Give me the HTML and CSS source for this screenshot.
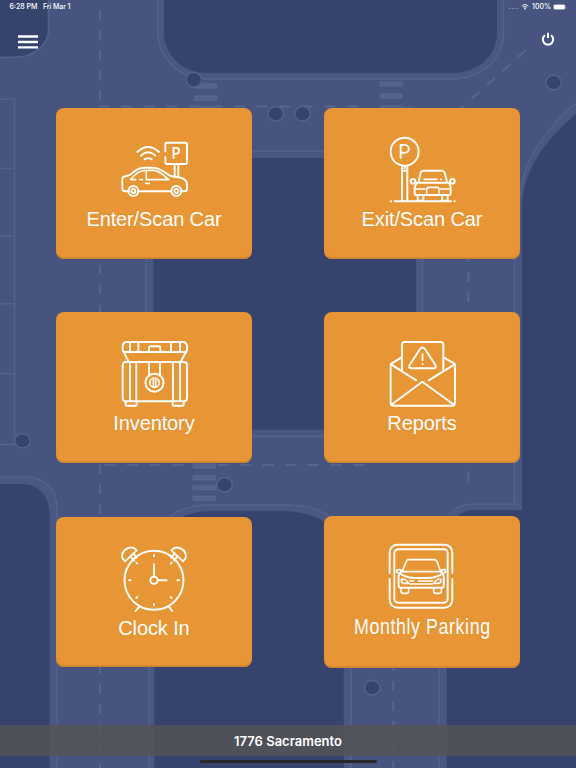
FILE: index.html
```html
<!DOCTYPE html>
<html lang="en">
<head>
<meta charset="utf-8">
<title>Parking</title>
<link rel="stylesheet" href="styles.css">
</head>
<body>
<svg class="map" viewBox="0 0 576 768" width="576" height="768" aria-hidden="true">
  <!-- road shoulders -->
  <g class="shoulder">
    <path d="M158 0V33C158 58 180 79 206 79H451C483 79 503.500 58 503.500 33V0Z"/>
    <path d="M146 151H422.500V436.500H146Z"/>
    <path d="M0 477H25C45 477 57 490 57 508V768H0Z"/>
    <path d="M149 768V560C149 525 175 505 209 505H287C325 505 351.300 525 351.300 560V768Z"/>
    <path d="M576 103C545 130 520 162 520 200L514.300 258V504.300H472C450 504.300 439 525 439 545V768H576Z"/>
  </g>
  <!-- city blocks -->
  <g class="block">
    <path d="M0 0H48V30C48 46 32 57 15 57H0Z"/>
    <path d="M164 0V33C164 54 182 73 206 73H451C478 73 497 56 497 33V0Z"/>
    <path d="M153.500 158H416V429.700H153.500Z"/>
    <path d="M0 484H22C39 484 49.500 497 49.500 514V768H0Z"/>
    <path d="M154.300 768V560C154.300 528 180 511 212 511H282C320 511 343.700 530 343.700 560V768Z"/>
    <path d="M576 114C545 140 522 172 522 208V510H475C457 510 446.700 525 446.700 545V768H576Z"/>
  </g>
  <g class="lane">
    <path d="M48.500 0V30C48.500 46 32 57.300 15 57.300H0"/>
    <path d="M158 0V33C158 58 180 79 206 79H451C483 79 503.500 58 503.500 33V0"/>
    <path d="M146 151H422.500V436.500H146Z"/>
    <path d="M0 477H25C45 477 57 490 57 508V768"/>
    <path d="M149 768V560C149 525 175 505 209 505H287C325 505 351.300 525 351.300 560V768"/>
    <path d="M576 103C545 130 520 162 520 200L514.300 258V504.300H472C450 504.300 439 525 439 545V768"/>
    <path d="M0 99H14.500V444.500H0M0 168.500H14M0 235.700H14M0 303.700H14M0 373.500H14"/>
  </g>
  <g class="dashes">
    <path d="M100 10.500V106" stroke-dasharray="10 10"/>
    <path d="M100 265V768" stroke-dasharray="9.500 10.450"/>
    <path d="M98.500 106.500H360" stroke-dasharray="11 11.600"/>
    <path d="M104.500 465H366" stroke-dasharray="11 11.600"/>
    <path d="M468.300 252V302" stroke-dasharray="10 10"/>
    <path d="M468.300 471.500V481.500"/>
    <path d="M393.300 661V768" stroke-dasharray="10 10"/>
    <path d="M526 50L460 109" stroke-dasharray="10.500 10.300"/>
  </g>
  <g class="crossing">
    <path d="M194 86H217.500M194 98.200H217.500M194 108.500H217.500M379.500 84H403M379.500 96H403M379.500 108H403M192.500 466H216M192.500 477.800H216M192.500 487.800H216M192.500 498.300H216"/>
  </g>
  <g class="tree">
    <ellipse cx="193.800" cy="79.700" rx="7.800" ry="7.200"/>
    <ellipse cx="275.800" cy="113.700" rx="7.800" ry="7.200"/>
    <ellipse cx="302.600" cy="113.700" rx="7.800" ry="7.200"/>
    <ellipse cx="408" cy="114" rx="7.800" ry="7.200"/>
    <ellipse cx="553.600" cy="82.500" rx="7.800" ry="7.200"/>
    <ellipse cx="22.500" cy="440.700" rx="7.800" ry="7.200"/>
    <ellipse cx="224.500" cy="484.700" rx="7.800" ry="7.200"/>
    <ellipse cx="372.300" cy="687.800" rx="7.800" ry="7.200"/>
  </g>
</svg>

<div class="app">
  <div class="status">
    <span class="time">6:28 PM</span>
    <span class="date">Fri Mar 1</span>
    <span class="signal">....</span>
    <svg class="wifi" viewBox="0 0 24 18" width="8" height="6"><path d="M2 6.500C8 .5 16 .5 22 6.500M6 10.500C9.500 7 14.500 7 18 10.500"/><path class="solid" d="M8.500 13.500Q12 10.500 15.500 13.500L12 17.500Z"/></svg>
    <span class="percent">100%</span>
    <svg class="battery" viewBox="0 0 42 18" width="14" height="6"><rect class="case" x="1" y="1" width="36" height="16" rx="5"/><rect class="solid" x="2.500" y="2.500" width="33" height="13" rx="3.500"/><path class="nub" d="M39 6Q42 9 39 12Z"/></svg>
  </div>
  <div class="toolbar">
    <svg class="menu" viewBox="0 0 20 14" width="20" height="14"><path d="M0 1.500H20M0 7H20M0 12.300H20"/></svg>
    <svg class="power" viewBox="0 0 14 14" width="14" height="14"><path d="M3.900 3.300A5.200 5.200 0 1 0 10.100 3.300M7 .8V6"/></svg>
  </div>

  <main class="grid">
    <a class="card">
      <svg class="icon" viewBox="0 0 270 240">
        <path d="M57 184H46Q37 184 37 173V147Q37 139 50 138Q60 136 66 130C78 118 90 113 106 113H128C150 113 160 124 178 136Q186 140 205 142Q231 145 231 165V177Q231 184 223 184H212M85 184H184"/>
        <path class="thin" d="M61 149C76 132 88 121 108 121H130C147 121 155 132 177 149H112M61 149H77M89 149H97M109 122V149M107 160H118"/>
        <circle cx="70" cy="183" r="15"/><circle cx="70" cy="183" r="6"/>
        <circle cx="199" cy="183" r="15"/><circle cx="199" cy="183" r="6"/>
        <path d="M82 66Q114 36 147 66M93 77Q114 56 136 77M104 88Q114 81 125 88"/>
        <path d="M166 64V43Q166 38 171 38H226Q231 38 231 43V97Q231 102 226 102H171Q166 102 166 97V81M194 103V139M205 103V141"/>
        <text class="sign" x="184" y="86">P</text>
      </svg>
      <span class="label">Enter/Scan Car</span>
    </a>
    <a class="card">
      <svg class="icon" viewBox="0 0 270 240">
        <circle cx="80" cy="65" r="42"/>
        <path d="M68 83V45H81A11 11 0 0 1 81 68H68"/>
        <path d="M72 108V212M88 108V212M73 122H87M80 108V115M50 214H219M38 214H39M229 214H230"/>
        <path d="M122 155L128 128Q130 122 137 122H191Q198 122 200 128L207 155M116 158H214L218 172V191Q218 195 214 195H114Q110 195 110 191V172Z"/>
        <path class="thin" d="M138 148H177M188 148H190M112 177H141M188 177H217M146 194V178Q146 172 152 172H177Q183 172 183 178V194"/>
        <path d="M119 196V209Q119 212 122 212H133Q136 212 136 209V196M192 196V209Q192 212 195 212H206Q209 212 209 209V196"/>
        <ellipse cx="105" cy="154" rx="7" ry="7"/><ellipse cx="223" cy="154" rx="7" ry="7"/>
      </svg>
      <span class="label">Exit/Scan Car</span>
    </a>
    <a class="card">
      <svg class="icon" viewBox="0 0 270 240">
        <path d="M50 24H217Q231 24 231 38V47Q231 54 224 54H45Q38 54 38 47V38Q38 24 50 24ZM60 24V54M85 24V54M183 24V54M210 24V54M117 53V42Q117 37 122 37H146Q151 37 151 42V53"/>
        <path d="M41 54L56 83M228 54L212 83M48 84H221Q231 84 231 94V191Q231 202 221 202H48Q38 202 38 191V94Q38 84 48 84ZM60 84V202M79 84V202M189 84V202M210 84V202M117 84V125M150 84V125"/>
        <circle cx="133.500" cy="146" r="27"/><circle class="thin" cx="133.500" cy="146" r="14"/>
        <path class="thin" d="M130 134V158M137 134V158"/>
        <path d="M47 203V212Q47 215 50 215H77Q80 215 80 212V203M188 203V212Q188 215 191 215H218Q221 215 221 212V203"/>
      </svg>
      <span class="label">Inventory</span>
    </a>
    <a class="card">
      <svg class="icon" viewBox="0 0 270 240">
        <path d="M72 110V32Q72 24 80 24H188Q196 24 196 32V110"/>
        <path d="M71 70L40 89M197 70L229 89M39 91L115 139M230 91L152 139M38 92V206Q38 215 47 215H222Q231 215 231 206V92L227 87M38 92L42 87M42 211L133 143L226 211"/>
        <path d="M126 45Q133 36 141 45L172 93Q177 103 166 103H101Q90 103 95 93ZM133.500 61V78M133.500 90V91"/>
      </svg>
      <span class="label">Reports</span>
    </a>
    <a class="card">
      <svg class="icon" viewBox="0 0 270 240">
        <circle cx="132" cy="124" r="88.500"/><circle cx="132" cy="124" r="11"/>
        <path d="M132 112V76M144 124H170M132 48V52M132 195V199M57 124H62M202 124H207M79 71L82 74M182 74L185 71M79 177L82 174M182 174L185 177M88 203L77 216M176 203L187 216"/>
        <path d="M80 34C66 18 37 27 36 53Q37 60 45 67ZM184 34C198 18 227 27 228 53Q227 60 219 67ZM61 51L72 65M70 43L80 56M203 51L192 65M194 43L184 56"/>
      </svg>
      <span class="label">Clock In</span>
    </a>
    <a class="card card-tall">
      <svg class="icon" viewBox="0 0 270 240">
        <path d="M35 106V46Q35 20 61 20H197Q223 20 223 46V106M35 123V183Q35 209 61 209H197Q223 209 223 183V123"/>
        <rect x="49" y="34" width="160" height="160" rx="12"/>
        <path class="thin" d="M74 97L85 70Q87 65 93 65H168Q174 65 177 70L186 97M74 101H186"/>
        <path d="M71 99C58 112 62 119 62 145Q62 149 66 149H192Q197 149 197 145C197 119 201 112 188 99M68 108C90 121 100 120 129 120S172 121 192 108"/>
        <ellipse class="thin" cx="63" cy="100" rx="7" ry="5"/><ellipse class="thin" cx="196" cy="100" rx="7" ry="5"/>
        <path class="thin" d="M70 124H79Q88 127 91 136H76Q69 134 70 124ZM189 124H180Q171 127 168 136H183Q190 134 189 124ZM96 129H107M121 129H164M96 138H164"/>
        <path class="thin" d="M69 151V160Q69 166 75 166H85Q92 166 92 160V151M167 151V160Q167 166 173 166H184Q190 166 190 160V151"/>
      </svg>
      <span class="label label-narrow">Monthly Parking</span>
    </a>
  </main>

  <footer class="location">1776 Sacramento</footer>
  <div class="home"></div>
</div>
</body>
</html>
```
FILE: styles.css
```css
* { box-sizing: border-box; }
body {
  margin: 0;
  width: 576px;
  height: 768px;
  overflow: hidden;
  background: #46547f;
  color: #fff;
  font-family: "Liberation Sans", Arial, sans-serif;
}
svg { display: block; flex: none; fill: none; }

.map { position: absolute; top: 0; left: 0; }
.shoulder { fill: #495782; }
.block { fill: #35436d; }
.lane { stroke: #53618d; stroke-width: 1.5; }
.dashes { stroke: #566490; stroke-width: 2.2; }
.crossing { stroke: #54628d; stroke-width: 5.5; }
.tree { fill: #35436d; stroke: #53618d; stroke-width: 1.5; }

.app {
  position: relative;
  display: flex;
  flex-direction: column;
  height: 768px;
}
.status {
  display: flex;
  align-items: center;
  height: 14px;
  padding: 0 9px 0 9.500px;
  font: 500 7px/14px Inter, sans-serif;
}
.date { margin-left: 5.500px; letter-spacing: -.1px; }
.signal { margin-left: auto; opacity: .55; letter-spacing: .5px; }
.wifi { margin-left: 2px; stroke: #fff; stroke-width: 3; }
.percent { margin: 0 2px 0 3px; }
.solid { fill: #fff; stroke: none; }
.case { stroke: #a3abc2; stroke-width: 1.5; }
.nub { fill: #a3abc2; }

.toolbar {
  display: flex;
  justify-content: space-between;
  height: 94px;
  padding: 21px 21.5px 0 18px;
}
.menu { stroke: #fff; stroke-width: 2.3; }
.power { margin-top: -3px; stroke: #fff; stroke-width: 2; }

.grid {
  display: grid;
  grid-template-columns: 196.500px 196.500px;
  grid-template-rows: 150.500px 150.500px 151.500px;
  column-gap: 71.500px;
  row-gap: 53.800px;
  padding-left: 55.700px;
}
.card {
  display: flex;
  flex-direction: column;
  align-items: center;
  height: 150.500px;
  padding-top: 22px;
  border-radius: 8px;
  background: #e89535;
  box-shadow: inset 0 -1.500px 1px #c98232;
}
.card-tall { height: 152px; margin-top: -.8px; }
.icon {
  width: 90px;
  height: 80px;
  margin-left: 2px;
  stroke: #fff;
  stroke-width: 5.8;
  stroke-linecap: round;
  stroke-linejoin: round;
}
.thin { stroke-width: 4.8; }
.sign {
  font: 600 46px "Open Sans", sans-serif;
  fill: #fff;
  stroke: none;
}
.label {
  margin-top: -3px;
  font-size: 20px;
  line-height: 24px;
  letter-spacing: -.12px;
  white-space: nowrap;
}
.label-narrow {
  font-size: 21.500px;
  letter-spacing: .7px;
  transform: scaleX(.83);
}

.location {
  height: 31px;
  margin-top: auto;
  padding-top: 1px;
  background: rgba(84, 84, 86, .82);
  font: 600 13px/30px Inter, sans-serif;
  text-align: center;
}
.home {
  width: 177px;
  height: 3.500px;
  margin: 3.500px auto 4.700px;
  border-radius: 2px;
  background: #28292c;
}
```
